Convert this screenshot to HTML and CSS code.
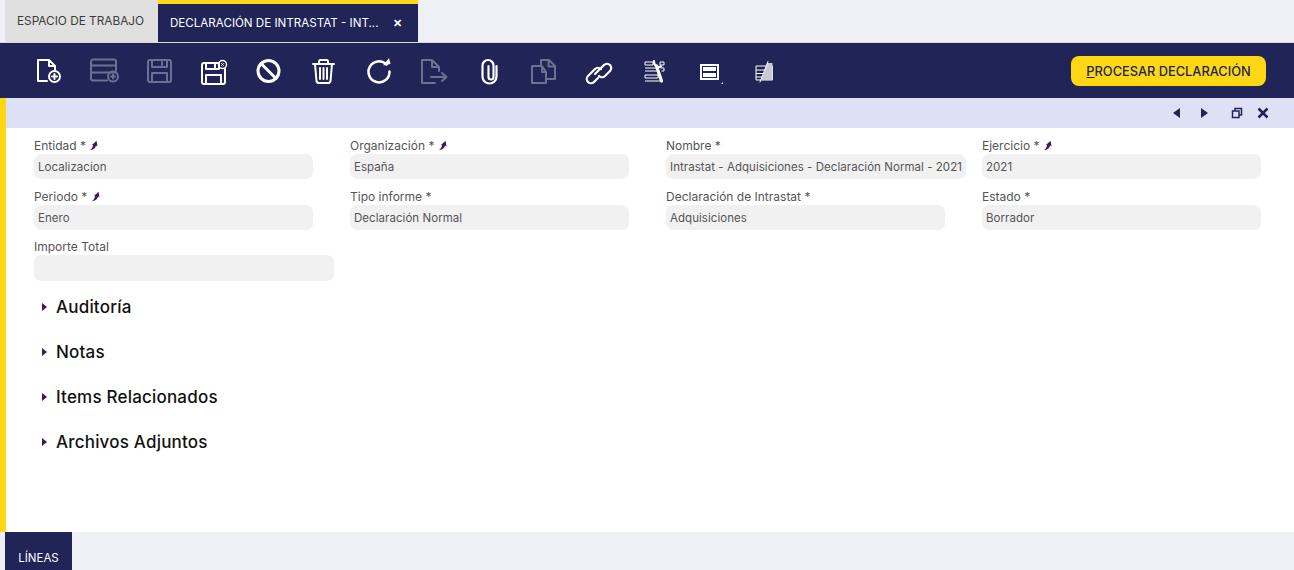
FILE: index.html
```html
<!DOCTYPE html>
<html lang="es">
<head>
  <meta charset="UTF-8">
  <title>Declaración de Intrastat</title>
  <link rel="stylesheet" href="styles.css">
</head>
<body>
  <div class="tabs">
    <div class="tab">ESPACIO DE TRABAJO</div>
    <div class="tab active"><span class="tab-title">DECLARACIÓN DE INTRASTAT - INT...</span><span class="tab-close">✕</span></div>
  </div>

  <div class="toolbar">
    <div class="tool"><svg viewBox="0 0 32 32"><path d="M15 26H6V5h11l6 6v4M17 5v6h6"/><circle cx="22.500" cy="21.500" r="5.500"/><path d="M20 21.500h5M22.500 19v5"/></svg></div>
    <div class="tool off"><svg viewBox="0 0 32 32"><path d="M20 25.500H6a2 2 0 0 1-2-2v-17a2 2 0 0 1 2-2h21a2 2 0 0 1 2 2v9M4 10.500h25M4 17.500h25"/><circle cx="26" cy="21.500" r="5"/><path d="M24 21.500h4M26 19.500v4"/></svg></div>
    <div class="tool off"><svg viewBox="0 0 32 32"><path d="M8 5h19a2 2 0 0 1 2 2v18a2 2 0 0 1-2 2H8a2 2 0 0 1-2-2V7a2 2 0 0 1 2-2zM10 5v7h15V5M10 27v-9h15v9M20 7v3"/></svg></div>
    <div class="tool"><svg viewBox="0 0 32 32"><path d="M21 8H7a2 2 0 0 0-2 2v17a2 2 0 0 0 2 2h19a2 2 0 0 0 2-2V14M9 8v6h13V8M9 29v-9h15v9M18 9.500v3"/><circle cx="25.500" cy="9.500" r="4" stroke-width="1.500"/><path d="M24.500 8.500l2 2M26.500 8.500l-2 2" stroke-width="1"/></svg></div>
    <div class="tool"><svg viewBox="0 0 32 32"><circle cx="16.500" cy="16" r="10.500" stroke-width="3"/><path d="M9 8.500l15 15" stroke-width="3"/></svg></div>
    <div class="tool"><svg viewBox="0 0 32 32"><path d="M6 9h21M12 8.500V6.500a1.500 1.500 0 0 1 1.500-1.500h6a1.500 1.500 0 0 1 1.500 1.500v2M8 9l1.500 17a2.500 2.500 0 0 0 2.500 2h9a2.500 2.500 0 0 0 2.500-2L25 9M13 13v11M16.500 13v11M20 13v11"/></svg></div>
    <div class="tool"><svg viewBox="0 0 32 32"><path d="M24.500 9.500a10.500 10.500 0 1 0 3 7" stroke-width="2.500"/><path class="solid" d="M21 10.500l7.500-1.500-1.500-6z"/></svg></div>
    <div class="tool off"><svg viewBox="0 0 32 32"><path d="M18 28H5V5h10l7 7v4M15 5v7h7M14 22h15M25 18l4.500 4-4.500 4"/></svg></div>
    <div class="tool"><svg viewBox="0 0 32 32"><path d="M24.500 11v10.500a7 7 0 0 1-14 0V10.500a5.500 5.500 0 0 1 11 0V22a2.500 2.500 0 0 1-5 0V11" stroke-width="2.200"/></svg></div>
    <div class="tool off"><svg viewBox="0 0 32 32"><path d="M15 11H5v17h14V17l-4-6v6h4M14 11V5h8l6 6v13h-9M21.500 5v6.500H28"/></svg></div>
    <div class="tool"><svg viewBox="0 0 32 32"><path d="M13 19l9-9a4.200 4.200 0 0 1 6 6l-5 5a4.200 4.200 0 0 1-6 0" stroke-width="2.200"/><path d="M19 14a4.200 4.200 0 0 0-6 0l-7 7a4.200 4.200 0 0 0 6 6l4-4" stroke-width="2.200"/></svg></div>
    <div class="tool"><svg viewBox="0 0 32 32"><path class="thin" d="M8 7h8v3H8zM23 7h4v3h-4zM8 13h11M8 16h12M23.500 13H27v3h-2.500M8 20h13v3H8zM8 26h15"/><path d="M19.500 11L24.500 26" stroke-width="3.200"/><path d="M17 6c-.5 4 3 7 7 5.500" stroke-width="2.200"/></svg></div>
    <div class="tool"><svg viewBox="0 0 32 32"><rect x="9" y="10" width="17" height="14" stroke-width="2" stroke-linejoin="miter"/><path class="solid" d="M11 12h13v4H11zM11 18h13v4H11z"/><path class="solid" d="M31 27v2h-2z"/></svg></div>
    <div class="tool"><svg viewBox="0 0 32 32"><path class="thin" d="M9 11h16.500v14H9zM9 15h10M9 18.500h8M9 22h7"/><path class="shade" d="M20 8h5.500v17H14.500z"/><path d="M21 6.500L13 27" stroke-width="1"/></svg></div>
    <button class="process"><u>P</u>ROCESAR DECLARACIÓN</button>
  </div>

  <div class="main">
    <div class="subbar">
      <svg class="nav" viewBox="0 0 12 12"><path class="fill" d="M9 1v10L2 6z"/></svg>
      <svg class="nav next" viewBox="0 0 12 12"><path class="fill" d="M3 1v10l7-5z"/></svg>
      <svg class="nav restore" viewBox="0 0 12 12"><path class="line" d="M1.500 4h6.500v6.500H1.500zM4 4V1.500h6.500V8H8"/></svg>
      <svg class="nav shut" viewBox="0 0 12 12"><path class="line heavy" d="M1.500 1.500l9 9M10.500 1.500l-9 9"/></svg>
    </div>

    <div class="form">
      <div class="field">
        <label>Entidad * <svg class="pin" viewBox="0 0 10 10"><path d="M.5 9.800c2-.8 3.200-2.800 3.600-5.300L2.700 4.800 7.500.2l1 5.800-1.500-.9C6.500 7.800 4 9.800.5 9.800z"/></svg></label>
        <div class="input">Localizacion</div>
      </div>
      <div class="field">
        <label>Organización * <svg class="pin" viewBox="0 0 10 10"><path d="M.5 9.800c2-.8 3.200-2.800 3.600-5.300L2.700 4.800 7.500.2l1 5.800-1.500-.9C6.500 7.800 4 9.800.5 9.800z"/></svg></label>
        <div class="input">España</div>
      </div>
      <div class="field">
        <label>Nombre *</label>
        <div class="input wide">Intrastat - Adquisiciones - Declaración Normal - 2021</div>
      </div>
      <div class="field">
        <label>Ejercicio * <svg class="pin" viewBox="0 0 10 10"><path d="M.5 9.800c2-.8 3.200-2.800 3.600-5.300L2.700 4.800 7.500.2l1 5.800-1.500-.9C6.500 7.800 4 9.800.5 9.800z"/></svg></label>
        <div class="input">2021</div>
      </div>
      <div class="field">
        <label>Periodo * <svg class="pin" viewBox="0 0 10 10"><path d="M.5 9.800c2-.8 3.200-2.800 3.600-5.300L2.700 4.800 7.500.2l1 5.800-1.500-.9C6.500 7.800 4 9.800.5 9.800z"/></svg></label>
        <div class="input">Enero</div>
      </div>
      <div class="field">
        <label>Tipo informe *</label>
        <div class="input">Declaración Normal</div>
      </div>
      <div class="field">
        <label>Declaración de Intrastat *</label>
        <div class="input">Adquisiciones</div>
      </div>
      <div class="field">
        <label>Estado *</label>
        <div class="input">Borrador</div>
      </div>
      <div class="field">
        <label>Importe Total</label>
        <div class="input wide tall"></div>
      </div>
    </div>

    <div class="sections">
      <div class="section"><span class="arrow"></span>Auditoría</div>
      <div class="section"><span class="arrow"></span>Notas</div>
      <div class="section"><span class="arrow"></span>Items Relacionados</div>
      <div class="section"><span class="arrow"></span>Archivos Adjuntos</div>
    </div>
  </div>

  <div class="bottom">
    <div class="bottom-tab">LÍNEAS</div>
  </div>
</body>
</html>
```

FILE: styles.css
```css
* {
  box-sizing: border-box;
}
html, body {
  height: 100%;
}
body {
  margin: 0;
  height: 570px;
  overflow: hidden;
  display: flex;
  flex-direction: column;
  font-family: "Inter", "Liberation Sans", sans-serif;
  background-color: #eff0f5;
  color: #444;
}
.tabs {
  height: 43px;
  padding-left: 5px;
  display: flex;
  flex: none;
  border-bottom: 1px solid #d8d9de;
}
.tab {
  width: 153px;
  background-color: #e0e0e0;
  color: #3c3c3c;
  font-size: 11.800px;
  line-height: 42px;
  padding-left: 12px;
  white-space: nowrap;
}
.tab.active {
  width: 260px;
  background-color: #202456;
  border-top: 4px solid #ffd813;
  color: #fff;
  font-size: 11.600px;
  line-height: 38px;
  display: flex;
  justify-content: space-between;
  padding: 0 16px 0 12px;
}
.tab-close {
  font-size: 11px;
  font-weight: bold;
}
.toolbar {
  height: 55px;
  flex: none;
  background-color: #202456;
  display: flex;
  align-items: center;
  padding: 0 28px 0 20px;
}
.tool {
  width: 55px;
  height: 55px;
  display: flex;
  align-items: center;
  justify-content: center;
}
.tool svg {
  width: 32px;
  height: 32px;
  overflow: visible;
  fill: none;
  stroke: #fff;
  stroke-width: 2;
  stroke-linejoin: round;
  stroke-linecap: round;
}
.tool.off svg {
  opacity: 0.35;
}
.tool .solid {
  fill: #fff;
  stroke: none;
}
.tool .shade {
  fill: #c9c9d2;
  stroke: none;
}
.tool .thin {
  stroke-width: 1;
  stroke-linecap: butt;
}
.process {
  margin-left: auto;
  width: 195px;
  height: 30px;
  padding: 1px 0 0;
  border: none;
  border-radius: 8px;
  background-color: #ffd813;
  color: #202456;
  font-family: inherit;
  font-size: 12.800px;
  font-weight: 500;
}
.main {
  flex: 1;
  background-color: #fff;
  border-left: 6px solid #ffd813;
}
.subbar {
  height: 30px;
  background-color: #dee0f6;
  display: flex;
  align-items: center;
  justify-content: flex-end;
  padding: 0 25px 0 0;
}
.nav {
  width: 12px;
  height: 12px;
  margin-left: 15px;
}
.nav.restore {
  margin-left: 21px;
}
.nav.shut {
  margin-left: 14px;
}
.nav .fill {
  fill: #202456;
}
.nav .line {
  fill: none;
  stroke: #202456;
  stroke-width: 1.500;
}
.nav .heavy {
  stroke-width: 2.500;
}
.form {
  display: grid;
  grid-template-columns: repeat(4, 316px);
  padding: 10px 0 0 28px;
}
.field {
  height: 50.500px;
}
label {
  display: flex;
  align-items: center;
  height: 15px;
  margin-bottom: 1px;
  font-size: 12px;
  color: #555;
  white-space: pre;
}
.pin {
  width: 10px;
  height: 11px;
  fill: #3b1a5e;
}
.input {
  width: 279px;
  height: 25px;
  border-radius: 7px;
  background-color: #f1f1f1;
  font-size: 11.500px;
  letter-spacing: 0.05px;
  line-height: 26px;
  padding-left: 4px;
  color: #555;
  white-space: nowrap;
  overflow: hidden;
}
.input.wide {
  width: 300px;
}
.input.tall {
  height: 26px;
}
.sections {
  margin-top: -5px;
  padding-left: 36px;
}
.section {
  height: 45px;
  display: flex;
  align-items: center;
  color: #111;
  font-size: 17px;
  letter-spacing: 0.2px;
  font-weight: 500;
}
.arrow {
  width: 0;
  height: 0;
  border-left: 5px solid #3b1a5e;
  border-top: 4.500px solid transparent;
  border-bottom: 4.500px solid transparent;
  margin-right: 9px;
}
.bottom {
  height: 38px;
  flex: none;
  padding-left: 5px;
  background-color: #eff0f5;
}
.bottom-tab {
  width: 67px;
  height: 38px;
  background-color: #202456;
  color: #fff;
  font-size: 11.500px;
  line-height: 52px;
  text-align: center;
}
```
